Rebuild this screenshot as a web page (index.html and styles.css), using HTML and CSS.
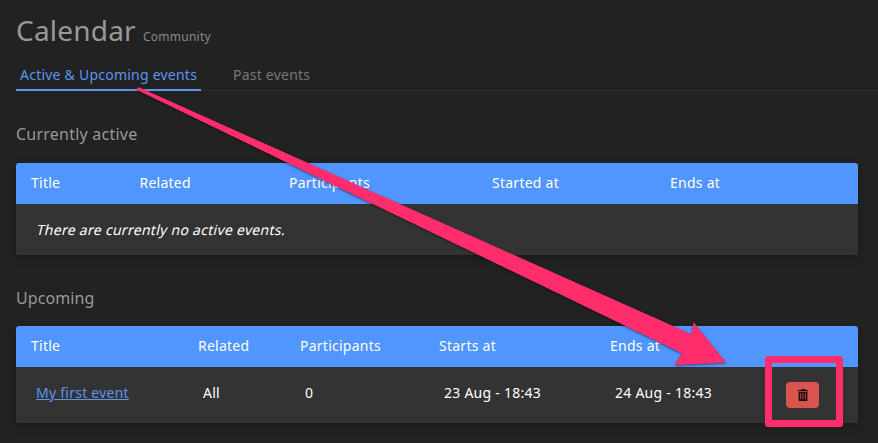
FILE: index.html
```html
<!DOCTYPE html>
<html lang="en">
<head>
<meta charset="utf-8">
<title>Calendar</title>
<link rel="stylesheet" href="styles.css">
</head>
<body>
<main class="page">
  <header class="heading">
    <h1>Calendar</h1>
    <small>Community</small>
  </header>
  <nav class="tabs">
    <a class="tab active"><span>Active &amp; Upcoming events</span></a>
    <a class="tab past"><span>Past events</span></a>
  </nav>
  <h2 class="current-title"><span>Currently active</span></h2>
  <section class="table current">
    <div class="row head">
      <span>Title</span><span>Related</span><span>Participants</span><span>Started at</span><span>Ends at</span>
    </div>
    <div class="empty"><em>There are currently no active events.</em></div>
  </section>
  <h2 class="upcoming-title"><span>Upcoming</span></h2>
  <section class="table upcoming">
    <div class="row head">
      <span>Title</span><span>Related</span><span>Participants</span><span>Starts at</span><span>Ends at</span>
    </div>
    <div class="row body">
      <span><a class="link">My first event</a></span><span>All</span><span>0</span><span>23 Aug - 18:43</span><span>24 Aug - 18:43</span>
      <button class="delete" aria-label="Delete">
        <svg width="12" height="14" viewBox="0 0 12 14"><path fill="#210d0c" fill-rule="evenodd" d="M.8 2h3l1-1h3l1 1h2.400v1.300H.8zM1.600 3.900h8.800v8.300q0 .8-.8.8H2.400q-.8 0-.8-.8zM3.300 5.300v6h.8v-6zM5.600 5.300v6h.8v-6zM7.900 5.300v6h.8v-6z"/></svg>
      </button>
    </div>
  </section>
</main>
<svg class="arrow" width="878" height="443" viewBox="0 0 878 443"><path d="M137 88.5Q137.500 87 139.500 87.500L691.500 334.300L693.500 322L726 362.500L674.500 365L682 353.300L137.500 90.300Z"/></svg>
<div class="highlight"></div>
</body>
</html>
```
FILE: styles.css
```css
* { box-sizing: border-box; }
body {
  margin: 0;
  height: 443px;
  overflow: hidden;
  background: #222;
  color: #fff;
  font: 14px/20px "Noto Sans", sans-serif;
}
.page { padding: 11px 0 0 16px; }
.heading {
  display: flex;
  align-items: baseline;
  height: 52px;
  color: #999;
}
h1 { margin: 0; font-size: 28px; line-height: 38px; font-weight: 400; letter-spacing: .2px; width: 127px; }
small { font-size: 12px; color: #888; letter-spacing: .25px; }
.tabs { display: flex; height: 28px; border-bottom: 1px solid #2d2d2d; }
.tab { height: 28px; padding: 2px 4px 0; color: #777; letter-spacing: .23px; white-space: nowrap; }
.tab.active { width: 185px; color: #5b94f0; border-bottom: 2px solid #6495e2; }
.past { margin-left: 28px; }
h2 { margin: 0; font-size: 16px; line-height: 22px; font-weight: 400; color: #999; }
.current-title { margin-top: 32px; letter-spacing: .23px; }
.table { width: 842px; box-shadow: 0 3px 9px rgba(0, 0, 0, .25); }
.current { margin-top: 18px; }
.row { display: grid; align-items: center; padding-left: 15px; letter-spacing: .25px; }
.head { height: 41px; padding-bottom: 2px; background: #5195ff; border-radius: 3px 3px 0 0; }
.current .row { grid-template-columns: 108.500px 149.500px 203px 178px 1fr; }
.empty { height: 51px; padding: 16px 21px; background: #333; }
.empty em { display: inline-block; font-style: normal; letter-spacing: .29px; transform: skewX(-14deg); }
.upcoming-title { margin-top: 32px; letter-spacing: .1px; }
.upcoming { margin-top: 17px; }
.upcoming .row { grid-template-columns: 167px 102px 139px 171px 171px 1fr; }
.upcoming .body { height: 56px; padding: 0 0 4px 20px; background: #333; }
.link { color: #5b94e8; text-decoration: underline; }
.delete {
  display: flex;
  align-items: center;
  justify-content: center;
  width: 33px;
  height: 26px;
  margin-top: 4px;
  padding: 0;
  border: 0;
  border-radius: 4px;
  background: #d9534f;
}
.arrow { position: absolute; top: 0; left: 0; fill: #ff2d6c; filter: drop-shadow(0 1px 1px rgba(0, 0, 0, .5)); pointer-events: none; }
.highlight { position: absolute; left: 765px; top: 356px; width: 78px; height: 71px; border: 7px solid #ff2d6c; border-radius: 3px; pointer-events: none; }
```
